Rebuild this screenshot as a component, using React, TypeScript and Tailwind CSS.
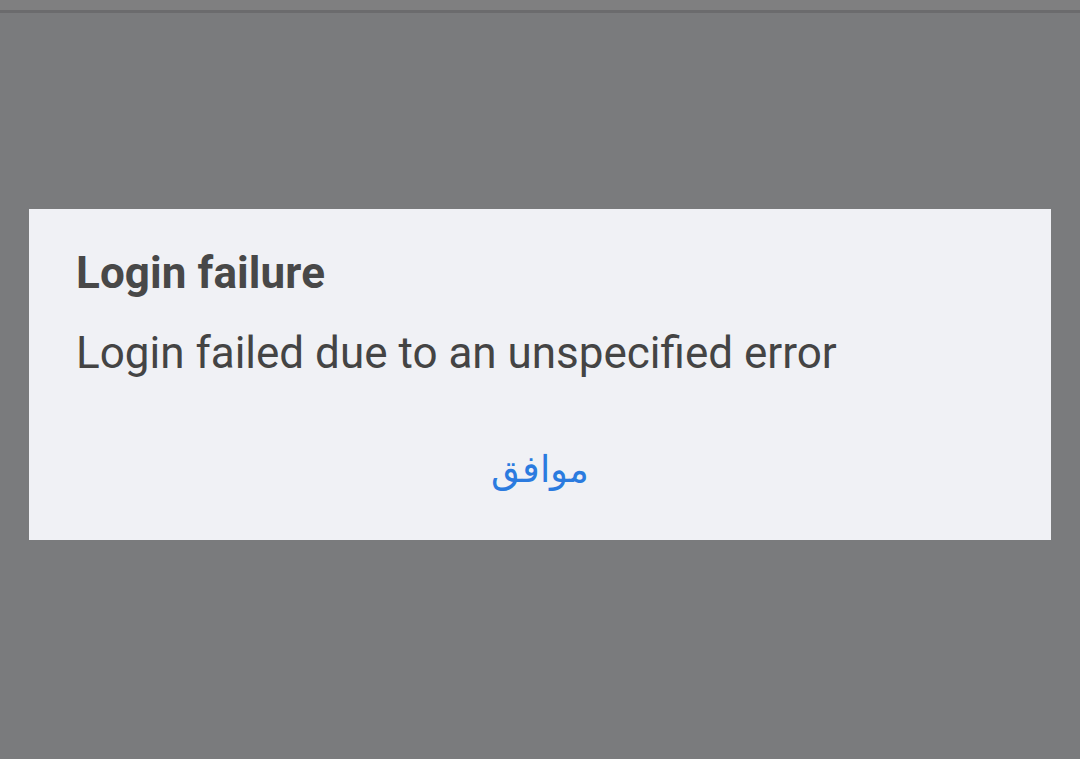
export default function App() {
  return (
    <div className="min-h-[759px] w-full bg-[#7a7b7d] flex flex-col font-['Roboto','Noto_Sans',sans-serif]">
      {/* status strip */}
      <div className="h-[10px] bg-[#7f7f80]" />
      <div className="h-[3px] bg-[#6b6b6d]" />

      <div className="pt-[196px] px-[29px]">
        <div className="bg-[#f0f1f5] h-[331px] pt-[38px] px-[47px] flex flex-col">
          <h2 className="text-[44px] leading-[52px] font-bold text-[#484848] tracking-[0.1px]">Login failure</h2>
          <p className="mt-[28px] text-[44px] leading-[52px] text-[#444444]">
            Login failed due to an unspecified error
          </p>
          <div className="mt-[67px] flex justify-center">
            <button className="text-[37px] leading-[48px] text-[#2b7bdf]">موافق</button>
          </div>
        </div>
      </div>
    </div>
  );
}
